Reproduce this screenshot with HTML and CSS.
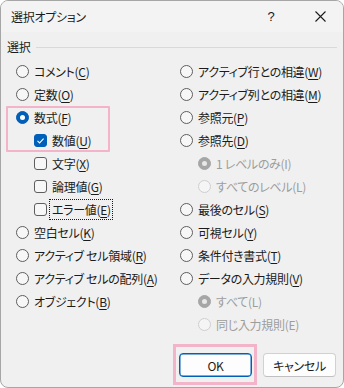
FILE: index.html
```html
<!DOCTYPE html>
<html lang="ja">
<head>
<meta charset="utf-8">
<link rel="stylesheet" href="styles.css">
</head>
<body>
<div class="window">
  <div class="titlebar">
    <span class="title">選択オプション</span>
    <span class="help">?</span>
    <span class="close"><svg width="11" height="11" viewBox="0 0 11 11"><path d="M0.5 0.5 L10.5 10.5 M10.5 0.5 L0.5 10.5" stroke="#1b1b1b" stroke-width="1.1" fill="none"/></svg></span>
  </div>
  <div class="content">
    <div class="group-head"><span class="group-label">選択</span><span class="rule"></span></div>
    <div class="columns">
      <div class="col col-left">
        <div class="row"><span class="radio"></span><span class="lbl">コメント(<u>C</u>)</span></div>
        <div class="row"><span class="radio"></span><span class="lbl">定数(<u>O</u>)</span></div>
        <div class="hl">
          <div class="row"><span class="radio on"></span><span class="lbl">数式(<u>F</u>)</span></div>
          <div class="row sub"><span class="check on"><svg width="13" height="13" viewBox="0 0 13 13"><path d="M3.5 6.8 L5.6 8.9 L9.6 4.6" stroke="#fff" stroke-width="1.1" fill="none"/></svg></span><span class="lbl">数値(<u>U</u>)</span></div>
        </div>
        <div class="row sub"><span class="check"></span><span class="lbl">文字(<u>X</u>)</span></div>
        <div class="row sub"><span class="check"></span><span class="lbl">論理値(<u>G</u>)</span></div>
        <div class="row sub"><span class="check"></span><span class="lbl focus">エラー値(<u>E</u>)</span></div>
        <div class="row"><span class="radio"></span><span class="lbl">空白セル(<u>K</u>)</span></div>
        <div class="row"><span class="radio"></span><span class="lbl">アクティブ セル領域(<u>R</u>)</span></div>
        <div class="row"><span class="radio"></span><span class="lbl">アクティブ セルの配列(<u>A</u>)</span></div>
        <div class="row"><span class="radio"></span><span class="lbl">オブジェクト(<u>B</u>)</span></div>
      </div>
      <div class="col col-right">
        <div class="row"><span class="radio"></span><span class="lbl">アクティブ行との相違(<u>W</u>)</span></div>
        <div class="row"><span class="radio"></span><span class="lbl">アクティブ列との相違(<u>M</u>)</span></div>
        <div class="row"><span class="radio"></span><span class="lbl">参照元(<u>P</u>)</span></div>
        <div class="row"><span class="radio"></span><span class="lbl">参照先(<u>D</u>)</span></div>
        <div class="row sub disabled"><span class="radio on"></span><span class="lbl">1 レベルのみ(I)</span></div>
        <div class="row sub disabled"><span class="radio"></span><span class="lbl">すべてのレベル(L)</span></div>
        <div class="row"><span class="radio"></span><span class="lbl">最後のセル(<u>S</u>)</span></div>
        <div class="row"><span class="radio"></span><span class="lbl">可視セル(<u>Y</u>)</span></div>
        <div class="row"><span class="radio"></span><span class="lbl">条件付き書式(<u>T</u>)</span></div>
        <div class="row"><span class="radio"></span><span class="lbl">データの入力規則(<u>V</u>)</span></div>
        <div class="row sub disabled"><span class="radio on"></span><span class="lbl">すべて(L)</span></div>
        <div class="row sub disabled"><span class="radio"></span><span class="lbl">同じ入力規則(E)</span></div>
      </div>
    </div>
    <div class="buttons">
      <div class="ok-hl"><button class="btn btn-default">OK</button></div>
      <button class="btn">キャンセル</button>
    </div>
  </div>
</div>
</body>
</html>
```
FILE: styles.css
```css
html, body {
  margin: 0;
  padding: 0;
  background: #ffffff;
}
body {
  font-family: "Noto Sans CJK JP", "Noto Sans", sans-serif;
  font-size: 12px;
  letter-spacing: -0.3px;
  color: #1b1b1b;
  font-feature-settings: "palt";
}
.window {
  width: 344px;
  height: 388px;
  box-sizing: border-box;
  border: 1px solid #a6a6a6;
  border-radius: 8px;
  overflow: hidden;
  background: #f0f0f0;
  display: flex;
  flex-direction: column;
}
.titlebar {
  height: 31px;
  flex: none;
  background: #f3f3f3;
  display: flex;
  align-items: center;
  padding-left: 10px;
}
.title {
  flex: 1;
}
.help {
  font-family: "Liberation Sans", sans-serif;
  font-size: 13px;
  letter-spacing: 0;
  width: 10px;
  margin-right: 39px;
  text-align: center;
}
.close {
  width: 11px;
  height: 11px;
  margin-right: 17px;
  display: flex;
}
.content {
  flex: 1;
  display: flex;
  flex-direction: column;
}
.group-head {
  height: 28px;
  display: flex;
  align-items: center;
  padding-left: 6px;
  padding-right: 6px;
}
.group-label {
  margin-right: 6px;
}
.rule {
  flex: 1;
  height: 1px;
  background: #d9d9d9;
  margin-top: 2px;
}
.columns {
  display: flex;
  padding-left: 15px;
}
.col-left {
  width: 164px;
}
.col-right {
  flex: 1;
}
.row {
  height: 23px;
  display: flex;
  align-items: center;
  white-space: nowrap;
}
.row.sub {
  padding-left: 18px;
}
.radio {
  width: 13px;
  height: 13px;
  box-sizing: border-box;
  border: 1px solid #5e5e5e;
  border-radius: 50%;
  background: #f7f7f7;
  flex: none;
  margin-right: 5px;
  position: relative;
}
.radio.on {
  background: #005fb8;
  border-color: #005fb8;
}
.radio.on::after {
  content: "";
  position: absolute;
  left: 3px;
  top: 3px;
  width: 5px;
  height: 5px;
  border-radius: 50%;
  background: #ffffff;
}
.check {
  width: 13px;
  height: 13px;
  box-sizing: border-box;
  border: 1px solid #5e5e5e;
  border-radius: 3px;
  background: #f7f7f7;
  flex: none;
  margin-right: 5px;
  display: flex;
}
.check.on {
  background: #005fb8;
  border-color: #005fb8;
}
.check svg {
  margin: -1px;
}
.lbl u {
  text-decoration-thickness: 1px;
  text-underline-offset: 2px;
}
.lbl.focus {
  outline: 1px dotted #1b1b1b;
  outline-offset: 1px;
  margin-left: -1px;
  padding-left: 1px;
}
.disabled .lbl {
  color: #9d9d9d;
}
.disabled .radio {
  border-color: #cfcfcf;
  background: #f5f5f5;
}
.disabled .radio.on {
  background: #a6a6a6;
  border-color: #a6a6a6;
}
.disabled .radio.on::after {
  background: #e8e8e8;
}
.hl {
  margin-left: -10px;
  padding-left: 10px;
  width: 94px;
  box-shadow: inset 0 0 0 2px #f3b3c8;
  border-radius: 1px;
}
.buttons {
  margin-top: 8px;
  display: flex;
  justify-content: flex-end;
  align-items: flex-start;
  padding-right: 7px;
  gap: 6px;
}
.ok-hl {
  padding: 9px 5px 8px 6px;
  box-shadow: inset 0 0 0 3px #f3b3c8;
}
.btn {
  font-family: "Noto Sans CJK JP", "Noto Sans", sans-serif;
  font-feature-settings: "palt";
  font-size: 12px;
  letter-spacing: -0.3px;
  color: #1b1b1b;
  width: 73px;
  height: 24px;
  box-sizing: border-box;
  border: 1px solid #d1d1d1;
  border-bottom-color: #c0c0c0;
  border-radius: 4px;
  background: #fdfdfd;
  padding: 0;
  margin-top: 9px;
}
.ok-hl .btn {
  margin-top: 0;
}
.btn-default {
  border: 1px solid #005fb8;
  box-shadow: inset 0 0 0 0.5px #005fb8;
}
```
